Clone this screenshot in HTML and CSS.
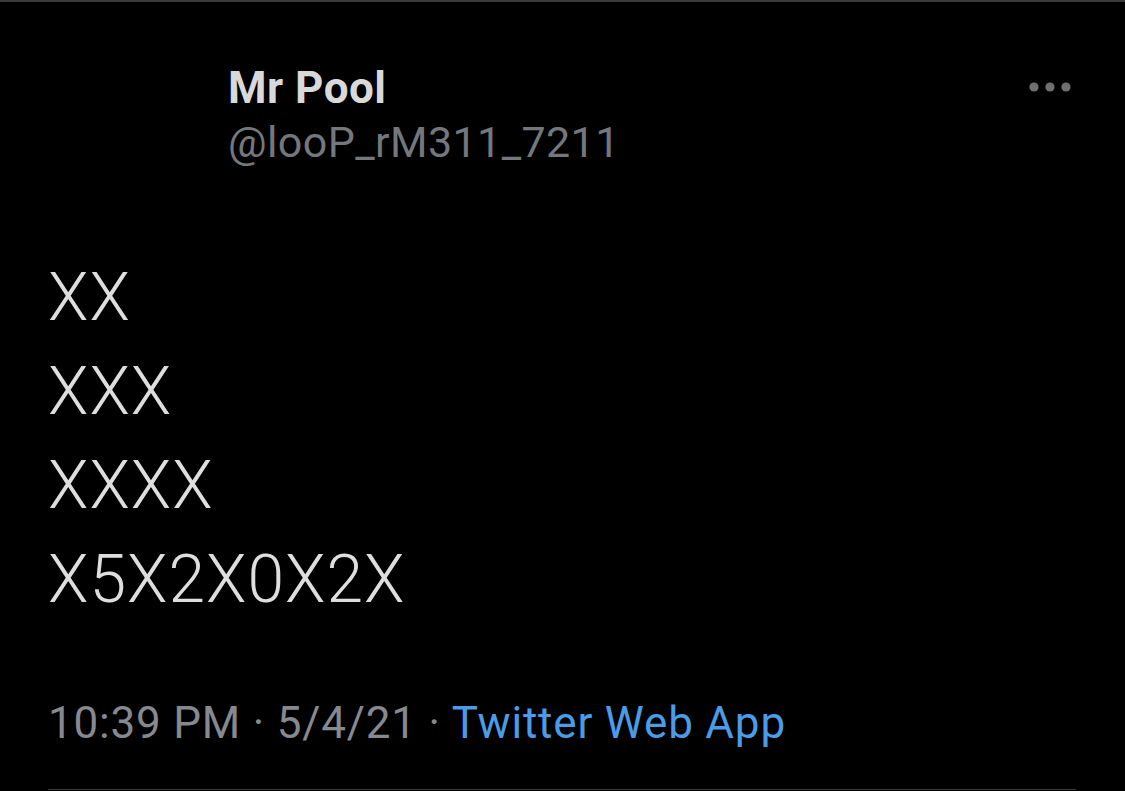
FILE: index.html
```html
<!DOCTYPE html>
<html lang="en">
<head>
<meta charset="utf-8">
<title>Mr Pool tweet</title>
<link rel="stylesheet" href="styles.css">
</head>
<body>
<div class="page">
  <article class="tweet">
    <header class="tweet-header">
      <div class="avatar-space"></div>
      <div class="names">
        <div class="display-name">Mr Pool</div>
        <div class="handle">@looP_rM311_7211</div>
      </div>
      <svg class="more" width="42" height="10" viewBox="0 0 42 10" aria-label="More">
        <circle cx="5" cy="5" r="4.6"/>
        <circle cx="21" cy="5" r="4.6"/>
        <circle cx="37" cy="5" r="4.6"/>
      </svg>
    </header>
    <div class="tweet-text">
      <div>XX</div>
      <div>XXX</div>
      <div>XXXX</div>
      <div>X5X2X0X2X</div>
    </div>
    <div class="meta">
      <span>10:39 PM</span> · <span>5/4/21</span> · <a class="source" href="#">Twitter Web App</a>
    </div>
  </article>
</div>
</body>
</html>
```

FILE: styles.css
```css
html, body {
  margin: 0;
  padding: 0;
  background: #000;
}

body {
  font-family: Roboto, "Liberation Sans", Arial, sans-serif;
  width: 1125px;
  height: 791px;
  overflow: hidden;
}

.page {
  border-top: 2px solid #3b3b3d;
  padding: 0 49px 0 48px;
}

.tweet {
  border-bottom: 1px solid #3a3a3c;
  padding-bottom: 39px;
}

.tweet-header {
  display: flex;
  align-items: flex-start;
  padding-top: 59px;
}

.avatar-space {
  width: 180px;
  flex: none;
}

.names {
  flex: 1;
}

.display-name {
  font-size: 44px;
  line-height: 54px;
  font-weight: 700;
  letter-spacing: 0.5px;
  color: #d9d9d9;
}

.handle {
  font-size: 43px;
  line-height: 54px;
  letter-spacing: 0.4px;
  color: #74777c;
}

.more {
  flex: none;
  margin-top: 21px;
  margin-right: 5px;
  fill: #707070;
}

.tweet-text {
  margin-top: 82px;
  font-size: 66px;
  line-height: 94px;
  font-weight: 300;
  letter-spacing: 1px;
  color: #dedede;
}

.meta {
  margin-top: 69px;
  font-size: 44px;
  line-height: 54px;
  letter-spacing: 0.8px;
  color: #86898e;
  white-space: nowrap;
}

.source {
  color: #4b9be6;
  text-decoration: none;
}
```
